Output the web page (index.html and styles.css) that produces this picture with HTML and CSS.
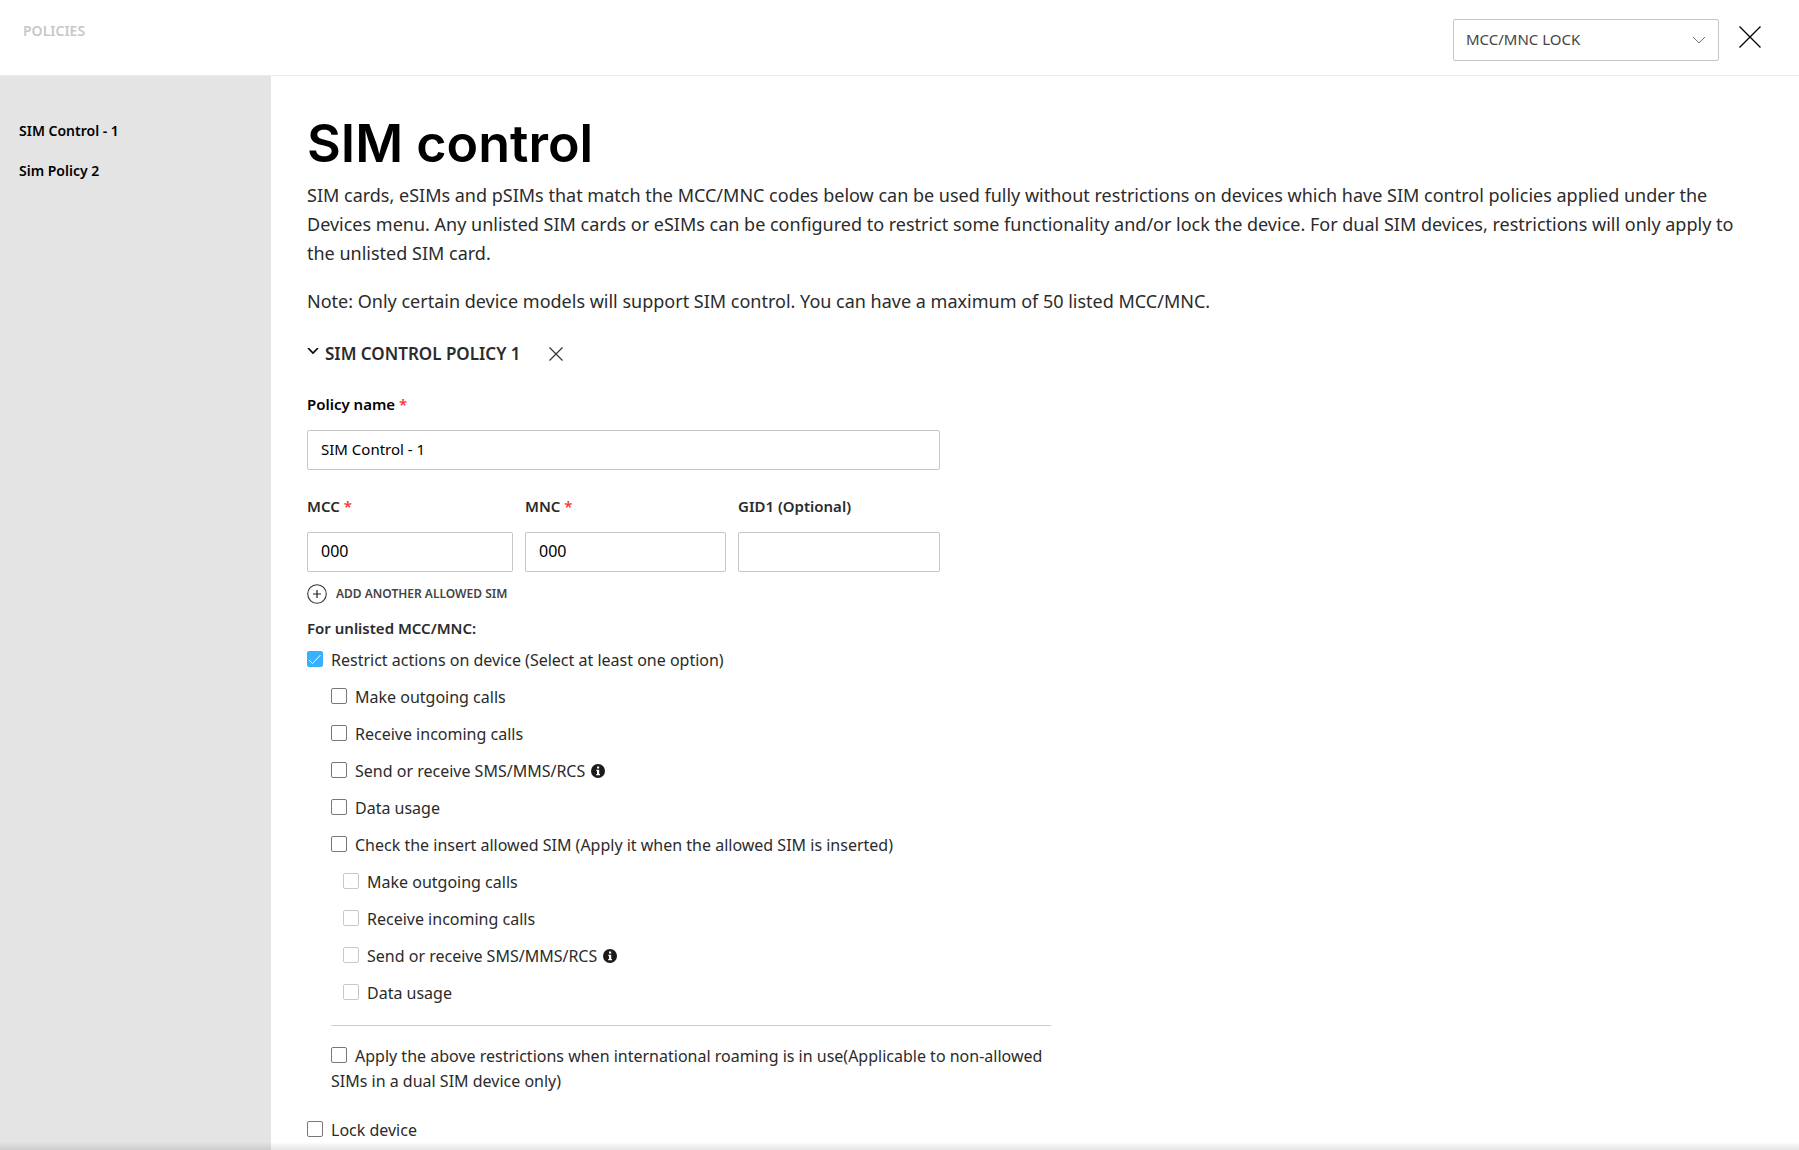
FILE: index.html
```html
<!DOCTYPE html>
<html lang="en">
<head>
<meta charset="utf-8">
<title>SIM control</title>
<link rel="stylesheet" href="styles.css">
</head>
<body>
<div class="app">
  <header class="topbar">
    <span class="topbar-title">POLICIES</span>
    <div class="topbar-tools">
      <div class="select-wrap">
        <select class="lock-select" aria-label="Policy type"><option>MCC/MNC LOCK</option></select>
        <svg class="select-arrow" width="14" height="8" viewBox="0 0 14 8" aria-hidden="true"><path d="M1 1l6 6 6-6" fill="none" stroke="#777" stroke-width="1"/></svg>
      </div>
      <button class="icon-button" type="button" aria-label="Close">
        <svg width="22" height="22" viewBox="0 0 22 22"><path d="M0.500 0.500l21 21M21.500 0.500l-21 21" fill="none" stroke="#000" stroke-width="1.300"/></svg>
      </button>
    </div>
  </header>
  <div class="body">
    <nav class="sidebar">
      <a href="#policy-1">SIM Control - 1</a>
      <a href="#policy-2">Sim Policy 2</a>
    </nav>
    <main class="content">
      <h1>SIM control</h1>
      <p class="intro">SIM cards, eSIMs and pSIMs that match the MCC/MNC codes below can be used fully without restrictions on devices which have SIM control policies applied under the Devices menu. Any unlisted SIM cards or eSIMs can be configured to restrict some functionality and/or lock the device. For dual SIM devices, restrictions will only apply to the unlisted SIM card.</p>
      <p class="intro">Note: Only certain device models will support SIM control. You can have a maximum of 50 listed MCC/MNC.</p>

      <form class="policy" id="policy-1">
        <div class="policy-head">
          <button class="icon-button toggle" type="button" aria-label="Collapse policy">
            <svg width="12" height="12" viewBox="0 0 12 12"><path d="M1 0l5 5 5-5" fill="none" stroke="#000" stroke-width="1.600"/></svg>
          </button>
          <h2>SIM CONTROL POLICY 1</h2>
          <button class="icon-button remove" type="button" aria-label="Remove policy">
            <svg width="14" height="14" viewBox="0 0 14 14"><path d="M0.500 0.500l13 13M13.500 0.500l-13 13" fill="none" stroke="#333" stroke-width="1.200"/></svg>
          </button>
        </div>

        <div class="fields">
          <div class="field name-field">
            <label for="name">Policy name <span class="required">*</span></label>
            <input id="name" type="text" value="SIM Control - 1">
          </div>
          <div class="field">
            <label for="mcc">MCC <span class="required">*</span></label>
            <input id="mcc" type="text" value="000">
          </div>
          <div class="field">
            <label for="mnc">MNC <span class="required">*</span></label>
            <input id="mnc" type="text" value="000">
          </div>
          <div class="field">
            <label for="gid">GID1 (Optional)</label>
            <input id="gid" type="text">
          </div>
        </div>

        <button class="add-button" type="button">
          <svg width="20" height="20" viewBox="0 0 20 20" aria-hidden="true"><circle cx="10" cy="10" r="9.300" fill="none" stroke="#333" stroke-width="1.100"/><path d="M10 6v8M6 10h8" stroke="#222" stroke-width="1.200"/></svg>
          ADD ANOTHER ALLOWED SIM
        </button>

        <h3>For unlisted MCC/MNC:</h3>
        <div class="options">
          <label class="option"><input type="checkbox" checked>Restrict actions on device (Select at least one option)</label>
          <div class="options nested">
            <label class="option"><input type="checkbox">Make outgoing calls</label>
            <label class="option"><input type="checkbox">Receive incoming calls</label>
            <label class="option"><input type="checkbox">Send or receive SMS/MMS/RCS<svg class="info" width="14" height="14" viewBox="0 0 14 14" aria-hidden="true"><circle cx="7" cy="7" r="7" fill="#1d1a1b"/><path d="M6 2.500h2.200v2H6zM5.300 5.700h2.900v4.300h.8v1.300H5.200v-1.300H6V7h-.7z" fill="#fff"/></svg></label>
            <label class="option"><input type="checkbox">Data usage</label>
            <label class="option"><input type="checkbox">Check the insert allowed SIM (Apply it when the allowed SIM is inserted)</label>
            <div class="options subnested">
              <label class="option"><input type="checkbox" disabled>Make outgoing calls</label>
              <label class="option"><input type="checkbox" disabled>Receive incoming calls</label>
              <label class="option"><input type="checkbox" disabled>Send or receive SMS/MMS/RCS<svg class="info" width="14" height="14" viewBox="0 0 14 14" aria-hidden="true"><circle cx="7" cy="7" r="7" fill="#1d1a1b"/><path d="M6 2.500h2.200v2H6zM5.300 5.700h2.900v4.300h.8v1.300H5.200v-1.300H6V7h-.7z" fill="#fff"/></svg></label>
              <label class="option"><input type="checkbox" disabled>Data usage</label>
            </div>
            <label class="option roaming"><input type="checkbox">Apply the above restrictions when international roaming is in use(Applicable to non-allowed SIMs in a dual SIM device only)</label>
          </div>
          <label class="option lock"><input type="checkbox">Lock device</label>
        </div>
      </form>
    </main>
  </div>
  <div class="bottom-shade"></div>
</div>
</body>
</html>
```
FILE: styles.css
```css
* {
  box-sizing: border-box;
}

body {
  margin: 0;
  background: #fff;
  color: #2b2b2b;
  font: 16px/25px "Noto Sans", sans-serif;
}

h1,
h2,
h3,
p {
  margin: 0;
}

.app {
  display: flex;
  flex-direction: column;
  height: 100vh;
  overflow: hidden;
}

.topbar {
  display: flex;
  flex: none;
  justify-content: space-between;
  align-items: flex-start;
  padding: 19px 38px 14px 23px;
  border-bottom: 1px solid #ebebeb;
}

.topbar-title {
  color: #c8c8c8;
  font-size: 14px;
  line-height: 24px;
  font-weight: 600;
}

.topbar-tools {
  display: flex;
  gap: 20px;
}

.select-wrap {
  position: relative;
  width: 266px;
}

.lock-select {
  appearance: none;
  display: block;
  width: 100%;
  height: 42px;
  padding: 0 12px 2px;
  border: 1px solid #c6c6c6;
  border-radius: 2px;
  background: #fff;
  color: #444;
  font: 15px "Noto Sans", sans-serif;
}

.select-arrow {
  position: absolute;
  top: 17px;
  right: 13px;
  pointer-events: none;
}

.icon-button {
  display: flex;
  padding: 0;
  border: 0;
  background: none;
}

.topbar .icon-button {
  padding-top: 7px;
}

.body {
  display: flex;
  flex: 1;
  min-height: 0;
}

.sidebar {
  display: flex;
  flex: none;
  flex-direction: column;
  gap: 16px;
  width: 271px;
  padding: 43px 19px;
  background: #e4e4e4;
}

.sidebar a {
  color: #000;
  font-size: 14px;
  line-height: 24px;
  font-weight: 600;
  text-decoration: none;
}

.content {
  flex: 1;
  overflow: hidden;
  padding: 31px 52px 0 36px;
}

h1 {
  margin-bottom: 1px;
  color: #000;
  font: 600 52px/73px Inter, sans-serif;
}

.intro {
  margin-bottom: 19px;
  font-size: 18px;
  line-height: 29px;
}

.policy-head {
  display: flex;
  align-items: center;
  margin-bottom: 24px;
  padding-top: 5px;
}

h2 {
  margin: 0 28px 0 6px;
  font-size: 17px;
  line-height: 28px;
  font-weight: 600;
}

.fields {
  display: grid;
  grid-template-columns: 206px 201px 202px;
  gap: 24px 12px;
}

.name-field {
  grid-column: 1 / -1;
}

.field label,
h3 {
  display: block;
  font-size: 15px;
  line-height: 24px;
  font-weight: 600;
}

.field.name-field label {
  color: #000;
}

.field input {
  display: block;
  width: 100%;
  height: 40px;
  margin-top: 14px;
  padding: 0 13px 2px;
  border: 1px solid #c6c6c6;
  border-radius: 2px;
  color: #000;
  font: 16px "Noto Sans", sans-serif;
}

.field.name-field input {
  font-size: 15px;
}

.required {
  color: #f33;
}

.add-button {
  display: flex;
  align-items: center;
  gap: 9px;
  margin: 12px 0;
  padding: 0;
  border: 0;
  background: none;
  color: #444;
  font: 600 12px/20px "Noto Sans", sans-serif;
}

h3 {
  margin-bottom: 8px;
}

.options {
  display: flex;
  flex-direction: column;
  gap: 12px;
}

.nested {
  padding-left: 24px;
}

.subnested {
  padding-left: 12px;
}

.option {
  display: block;
  max-width: 720px;
}

.option input {
  appearance: none;
  width: 16px;
  height: 16px;
  margin: 0 8px 0 0;
  border: 1px solid #777;
  border-radius: 2px;
  background: #fff;
  vertical-align: -1px;
}

.option input:checked {
  border-color: #38b0ff;
  background: #38b0ff url("data:image/svg+xml,%3Csvg xmlns='http://www.w3.org/2000/svg' viewBox='0 0 14 14'%3E%3Cpath d='M1 8l3.500 3.500L12.500 3' fill='none' stroke='white' stroke-width='1'/%3E%3C/svg%3E") center / 14px no-repeat;
}

.option input:disabled {
  border-color: #c8c8c8;
}

.info {
  margin-left: 6px;
  vertical-align: -1px;
}

.roaming {
  margin-top: 7px;
  padding-top: 18px;
  border-top: 1px solid #ccc;
}

.lock {
  margin-top: 12px;
}

.bottom-shade {
  position: fixed;
  right: 0;
  bottom: 0;
  left: 0;
  height: 8px;
  background: linear-gradient(transparent, rgba(0, 0, 0, 0.1));
  pointer-events: none;
}
```
